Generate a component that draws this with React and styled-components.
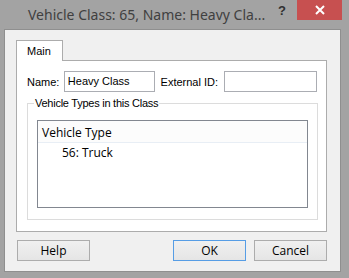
import React from 'react';
import styled, { createGlobalStyle } from 'styled-components';

const GlobalStyle = createGlobalStyle`
  html, body {
    margin: 0;
    padding: 0;
    background: #a3a3a3;
  }
  * {
    box-sizing: border-box;
  }
`;

const Window = styled.div`
  width: 349px;
  height: 278px;
  display: flex;
  flex-direction: column;
  background: #a3a3a3;
  font-family: 'Liberation Sans', Arial, sans-serif;
  font-size: 11px;
  color: #000;
`;

const TitleBar = styled.div`
  height: 29px;
  display: flex;
  align-items: flex-start;
  flex-shrink: 0;
`;

const Title = styled.div`
  flex: 1;
  padding: 5px 0 0 28px;
  font-family: 'Noto Sans', 'Open Sans', sans-serif;
  font-size: 14px;
  color: #404040;
  white-space: nowrap;
`;

const HelpGlyph = styled.div`
  width: 19px;
  padding-top: 3px;
  font-family: 'Liberation Sans', Arial, sans-serif;
  font-weight: bold;
  font-size: 13px;
  color: #303030;
`;

const CloseButton = styled.div`
  width: 45px;
  height: 20px;
  margin-right: 7px;
  background: #c75050;
  display: flex;
  align-items: center;
  justify-content: center;
`;

const Client = styled.div`
  flex: 1;
  margin: 0 8px 6px 4px;
  background: #f0f0f0;
  border: 1px solid #8f8f8f;
  padding: 10px 13px 0 11px;
  display: flex;
  flex-direction: column;
`;

const TabStrip = styled.div`
  display: flex;
  height: 20px;
`;

const Tab = styled.div`
  width: 47px;
  height: 21px;
  background: #fff;
  border: 1px solid #acacac;
  border-bottom: none;
  padding: 4px 0 0 10px;
  position: relative;
  z-index: 1;
`;

const Panel = styled.div`
  height: 172px;
  background: #fff;
  border: 1px solid #acacac;
  padding: 10px 9px 0 10px;
  display: flex;
  flex-direction: column;
`;

const FieldRow = styled.div`
  display: flex;
  align-items: center;
  height: 21px;
`;

const Label = styled.span`
  width: ${(p) => p.$w}px;
`;

const Input = styled.div`
  width: ${(p) => p.$w}px;
  height: 21px;
  border: 1px solid #abadb3;
  background: #fff;
  padding: 3px 0 0 3px;
  margin-right: ${(p) => p.$gap || 0}px;
`;

const Group = styled.fieldset`
  margin: 5px 0 0 0;
  padding: 11px 9px 4px 9px;
  height: 123px;
  width: 291px;
  border: 1px solid #dcdcdc;
`;

const Legend = styled.legend`
  padding: 0 1px;
  margin-left: -3px;
  font-size: 11px;
  letter-spacing: -0.25px;
`;

const ListView = styled.div`
  height: 88px;
  border: 1px solid #828790;
  background: #fff;
`;

const ListHeader = styled.div`
  height: 22px;
  background: #fcfcfc;
  border-bottom: 1px solid #e8eef5;
  padding: 3px 0 0 4px;
  font-family: 'Open Sans', 'Noto Sans', sans-serif;
  font-size: 12px;
`;

const ListItem = styled.div`
  padding: 1px 0 0 24px;
  font-family: 'Open Sans', 'Noto Sans', sans-serif;
  font-size: 12px;
`;

const ButtonRow = styled.div`
  display: flex;
  margin-top: 8px;
  padding-left: 1px;
`;

const Button = styled.div`
  width: 74px;
  height: 21px;
  border: 1px solid ${(p) => (p.$primary ? '#569de5' : '#acacac')};
  background: linear-gradient(#f0f0f0, #e5e5e5);
  display: flex;
  align-items: center;
  justify-content: center;
  margin-left: ${(p) => p.$ml || 0}px;
  font-family: 'Open Sans', 'Noto Sans', sans-serif;
  font-size: 12px;
`;

export default function App() {
  return (
    <>
      <GlobalStyle />
      <Window>
        <TitleBar>
          <Title>Vehicle Class: 65, Name: Heavy Cla...</Title>
          <HelpGlyph>?</HelpGlyph>
          <CloseButton>
            <svg width="10" height="10" viewBox="0 0 10 10">
              <path d="M1 1L9 9M9 1L1 9" stroke="#fff" strokeWidth="2" />
            </svg>
          </CloseButton>
        </TitleBar>
        <Client>
          <TabStrip>
            <Tab>Main</Tab>
          </TabStrip>
          <Panel>
            <FieldRow>
              <Label $w={37}>Name:</Label>
              <Input $w={91} $gap={6}>Heavy Class</Input>
              <Label $w={64}>External ID:</Label>
              <Input $w={93} />
            </FieldRow>
            <Group>
              <Legend>Vehicle Types in this Class</Legend>
              <ListView>
                <ListHeader>Vehicle Type</ListHeader>
                <ListItem>56: Truck</ListItem>
              </ListView>
            </Group>
          </Panel>
          <ButtonRow>
            <Button>Help</Button>
            <Button $primary $ml={83}>OK</Button>
            <Button $ml={8}>Cancel</Button>
          </ButtonRow>
        </Client>
      </Window>
    </>
  );
}
